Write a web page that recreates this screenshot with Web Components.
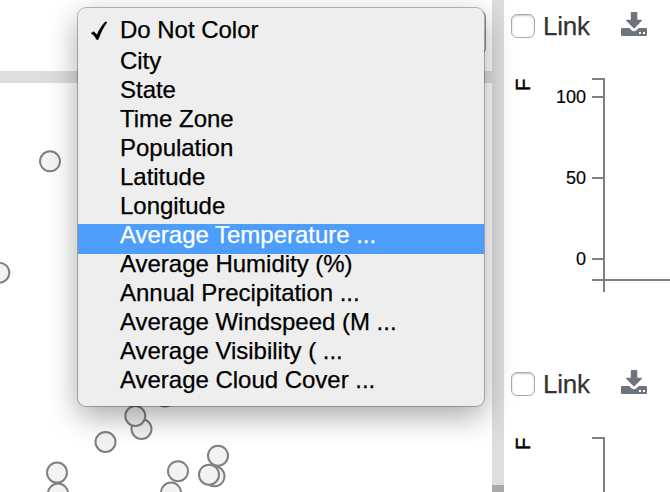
<!DOCTYPE html>
<html lang="en">
<head>
<meta charset="utf-8">
<title>Plot workspace</title>
<style>
html,body{margin:0;width:670px;height:492px;overflow:hidden;background:#fff;font-family:"Liberation Sans",Arial,sans-serif}
</style>
</head>
<body>
<plot-workspace></plot-workspace>
<script>
const define = (name, html, setup) => customElements.define(name, class extends HTMLElement {
  constructor() {
    super();
    const t = document.createElement('template');
    t.innerHTML = html;
    this.attachShadow({mode: 'open'}).append(t.content.cloneNode(true));
  }
  connectedCallback() { if (setup) setup(this, this.shadowRoot); }
});

define('menu-option', `
<style>
:host{display:grid;grid-template-columns:42px 1fr;height:29px;line-height:29px;font-size:24px;color:#000;white-space:pre;-webkit-text-stroke:.25px currentColor}
:host([selected]){height:35px}
:host([active]){background:#4d9dfb;color:#fff;height:30px;margin-bottom:-1px}
svg{display:none;width:42px;height:29px}
:host([selected]) svg{display:block}
span{position:relative;top:-4px;letter-spacing:-.02px}
:host([selected]) span{top:0}
</style>
<div><svg viewBox="0 0 42 29"><path d="M13.2 17.4l2.6-1.5 3.2 3.3c2-5 4.7-9.2 8.3-13.1l1.6.3c-3.7 5.1-6.4 10.6-8.7 17.2h-1.6c-1.3-2.7-2.9-4.8-5.4-6.2z" transform="translate(0 .8)" fill="#000" stroke="#000" stroke-width=".6"/></svg></div>
<span><slot></slot></span>`);

define('popup-menu', `
<style>
:host{display:block;box-sizing:border-box;width:406px;height:398px;padding-top:7px;background:#eee;border-radius:8px;
box-shadow:0 0 0 1px rgba(0,0,0,.25),0 10px 30px rgba(0,0,0,.35)}
</style><slot></slot>`);

define('scatter-pane', `
<style>
:host{display:grid;grid-template-rows:71px 12px 1fr;height:492px;overflow:hidden}
.top{display:flex;justify-content:flex-end;padding:10px 6px 16px 0}
.select{width:390px;box-sizing:border-box;border:1px solid #888;border-radius:7px}
.bar{background:#ddd}
svg{display:block;width:492px;height:409px}
circle{fill:#f3f3f3;stroke:#808080;stroke-width:2}
</style>
<div class="top"><div class="select"></div></div><div class="bar"></div>
<svg viewBox="0 83 492 409"></svg>`, (h, r) => {
  r.querySelector('svg').innerHTML = [[50,161.3],[-.7,272.7],[165,396.4],[141.5,429],[135.3,416],[105.5,442],[58,493.5],[57,472.6],[171,492.6],[178,471.2],[218,455.7],[214.5,476.3],[209,474.7]]
    .map(([x, y]) => `<circle cx="${x}" cy="${y}" r="10"/>`).join('');
});

define('pane-gutter', `
<style>
:host{display:grid;grid-template-rows:1fr 7px;background:#ddd}
i{grid-row:2;background:#aaa}
</style><i></i>`);

define('download-icon', `
<style>:host{display:block;width:26px;height:24px}svg{display:block}</style>
<svg width="26" height="24" viewBox="0 0 26 24"><g fill="#6c757d"><path d="M10.7 0h4.8q.8 0 .8.8V7.800h4.100q1.100 0 .4.900l-6.900 7.300q-.8.800-1.600 0L5.200 8.700q-.7-.9.4-.9h4.200V.8q0-.8.9-.8z"/><path d="M1.300 16h6.900l2.400 2.300q2.400 2 4.800 0l2.300-2.300h7q1.300 0 1.300 1.300v5.400q0 1.300-1.300 1.300H1.300Q0 24 0 22.700v-5.400Q0 16 1.300 16z"/></g><path d="M18 20h2v2h-2zM22 20h2v2h-2z" fill="#fff"/></svg>`);

define('link-toggle', `
<style>
:host{display:flex;align-items:center;font-size:26px;line-height:30px;color:#333;-webkit-text-stroke:.25px currentColor;letter-spacing:-.2px}
i{box-sizing:border-box;width:24px;height:24px;border:1px solid #aaa;border-radius:6px;background:#fff;box-shadow:inset 0 1px 2px rgba(0,0,0,.22);margin-right:8px}
</style><i></i><slot></slot>`);

define('axis-chart', `
<style>
:host{display:block}svg{display:block}
path{fill:none;stroke:#808080;stroke-width:2}
text{font:18px "Liberation Sans",Arial,sans-serif;fill:#000;stroke:#000;stroke-width:.15px}
.unit{font-size:20px;stroke-width:.5px}
</style>
<svg width="166" height="292" viewBox="504 50 166 292"></svg>`, (h, r) => {
  const ticks = (h.getAttribute('ticks') || '').split(' ').filter(Boolean).map(Number);
  const y = v => 259 - v * 1.62;
  r.querySelector('svg').innerHTML = `<text class="unit" transform="translate(530 91) rotate(-90)">F</text>
<path d="M592 79H604V292M592 280H670${ticks.map(v => `M592 ${y(v)}H604`).join('')}"/>
<g text-anchor="end">${ticks.map(v => `<text x="586" y="${y(v) + 6}">${v}</text>`).join('')}</g>`;
});

define('chart-card', `
<style>
:host{display:block;height:358px}
header{display:flex;height:50px;box-sizing:border-box;padding:11px 0 0 7px}
link-toggle{height:30px;width:110px}
download-icon{margin-top:1px}
</style>
<header><link-toggle>Link</link-toggle><download-icon></download-icon></header>
<slot></slot>`);

define('plot-workspace', `
<style>
:host{display:grid;grid-template-columns:492px 12px 166px;width:670px;height:492px;overflow:hidden;position:relative}
.charts{overflow:hidden;height:492px}
chart-card + chart-card axis-chart{padding-top:1px}
popup-menu{position:absolute;left:78px;top:8px}
</style>
<scatter-pane></scatter-pane><pane-gutter></pane-gutter>
<div class="charts"><chart-card><axis-chart ticks="0 50 100"></axis-chart></chart-card><chart-card><axis-chart></axis-chart></chart-card></div>
<popup-menu>
<menu-option selected>Do Not Color</menu-option><menu-option>City</menu-option><menu-option>State</menu-option><menu-option>Time Zone</menu-option><menu-option>Population</menu-option><menu-option>Latitude</menu-option><menu-option>Longitude</menu-option><menu-option active>Average Temperature ...</menu-option><menu-option>Average Humidity (%)</menu-option><menu-option>Annual Precipitation ...</menu-option><menu-option>Average Windspeed (M ...</menu-option><menu-option>Average Visibility ( ...</menu-option><menu-option>Average Cloud Cover ...</menu-option>
</popup-menu>`);
</script>
</body>
</html>
